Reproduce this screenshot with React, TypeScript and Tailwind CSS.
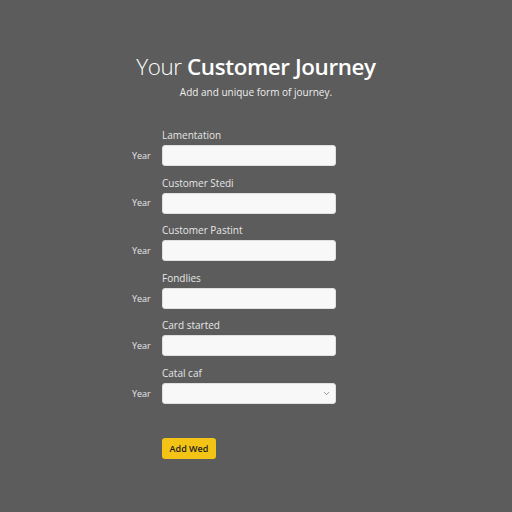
import { ChevronDown } from 'lucide-react';

const fields = [
  { label: 'Lamentation', side: 'Year' },
  { label: 'Customer Stedi', side: 'Year' },
  { label: 'Customer Pastint', side: 'Year' },
  { label: 'Fondlies', side: 'Year' },
  { label: 'Card started', side: 'Year' },
];

export default function App() {
  return (
    <div
      className="h-[512px] w-full bg-[#5c5c5c] pt-[52px] text-white"
      style={{ fontFamily: '"Open Sans", "Noto Sans", sans-serif' }}
    >
      {/* Header */}
      <h1 className="text-center text-[22.4px] leading-[30px] tracking-[-0.4px]">
        <span className="font-light">Your </span>
        <span className="font-semibold">Customer Journey</span>
      </h1>
      <p className="mt-[3px] text-center text-[10px] leading-[14px] text-[#eeeeee]">
        Add and unique form of journey.
      </p>

      {/* Form */}
      <div className="mt-[30px] flex flex-col pl-[132px]">
        {fields.map((f) => (
          <div key={f.label} className="mb-[10.6px] flex flex-col">
            <div className="mb-[4px] pl-[30px] text-[10px] leading-[12px] text-[#e6e6e6]">{f.label}</div>
            <div className="flex items-center">
              <span className="w-[30px] text-[9px] text-[#e6e6e6]">{f.side}</span>
              <input
                type="text"
                className="h-[21px] w-[174px] rounded-[3px] border border-[#e0e0e0] bg-[#f8f8f8] outline-none"
              />
            </div>
          </div>
        ))}
        <div className="flex flex-col">
          <div className="mb-[4px] pl-[30px] text-[10px] leading-[12px] text-[#e6e6e6]">Catal caf</div>
          <div className="flex items-center">
            <span className="w-[30px] text-[9px] text-[#e6e6e6]">Year</span>
            <div className="flex h-[21px] w-[174px] items-center justify-end rounded-[3px] border border-[#e0e0e0] bg-[#f8f8f8] pr-[4px]">
              <ChevronDown size={9} className="text-[#777777]" strokeWidth={2} />
            </div>
          </div>
        </div>

        <button className="ml-[30px] mt-[34px] h-[21px] w-[54px] rounded-[3px] bg-[#f3c316] text-[9px] font-semibold text-[#222222]">
          Add Wed
        </button>
      </div>
    </div>
  );
}
